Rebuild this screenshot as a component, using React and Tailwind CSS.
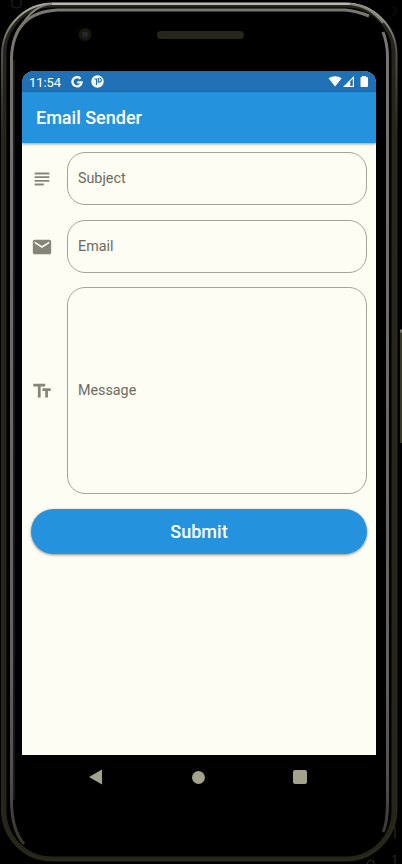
import React from "react";

function PhoneFrame() {
  return (
    <svg className="pointer-events-none absolute inset-0" width="402" height="864" viewBox="0 0 402 864" fill="none">
      <defs>
        <linearGradient id="rim" x1="0" y1="0" x2="0" y2="1">
          <stop offset="0" stopColor="#b5b5ad" />
          <stop offset="0.05" stopColor="#55554a" />
          <stop offset="0.15" stopColor="#29291a" />
          <stop offset="1" stopColor="#292917" />
        </linearGradient>
        <linearGradient id="inner" gradientUnits="userSpaceOnUse" x1="0" y1="10" x2="0" y2="846">
          <stop offset="0" stopColor="#77776f" />
          <stop offset="0.8" stopColor="#62625b" />
          <stop offset="0.92" stopColor="#505048" />
          <stop offset="1" stopColor="#33332a" />
        </linearGradient>
      </defs>
      <rect x="4" y="5" width="390" height="854" rx="48" stroke="#25251a" strokeWidth="5" />
      <rect x="2" y="3.5" width="394.5" height="856.5" rx="51" stroke="url(#rim)" strokeWidth="2" />
      <path d="M50 4H355" stroke="#b9b9b2" strokeWidth="2" />
      <path d="M20 28Q33 5 52 4M350 4Q370 6 383 23" stroke="#85857c" strokeWidth="2" />
      <path
        d="M24 844Q11.500 830 11.500 800V58Q13 12 58 10H345Q357 11 369 16M383 32Q387.500 43 387.500 58V800Q387.500 823 383 832"
        stroke="url(#inner)"
        strokeWidth="3"
      />
      <path d="M14 800V60" stroke="#303042" strokeWidth="1" />
      <path d="M12 0V4Q12 8 16.500 8T21 4V0" stroke="#29291a" />
      <path d="M0 614V680" stroke="#000" strokeWidth="2" />
      <path d="M401 332V443" stroke="#39392a" strokeWidth="2" />
      <path d="M400 331H402" stroke="#777770" strokeWidth="3" />
      <path d="M393 828L395 827V839M393 857L395 855V864M367 864Q368 860 371 860T374 864" stroke="#303020" />
      <path d="M392 8Q396 6 395 10Q399 14 392 15" stroke="#15150c" />
      <circle cx="85" cy="34.500" r="6.500" fill="#17170e" />
      <circle cx="85" cy="34.500" r="3" fill="#26262c" />
      <rect x="157" y="31" width="87" height="8" rx="4" fill="#26261a" />
    </svg>
  );
}

function StatusBar() {
  return (
    <div className="flex h-[21px] shrink-0 items-center bg-[#1f70b4] pl-[7px] pr-[7px] text-white">
      <span className="w-[33px] whitespace-nowrap pt-[2px] text-[13px] leading-none tracking-[-0.1px]">11:54</span>
      <svg className="ml-[9px]" width="12" height="12" viewBox="0 0 12 12" fill="none">
        <path d="M9.500 2.700A4.600 4.600 0 1 0 10.600 6.300H6.200" stroke="white" strokeWidth="2.300" />
      </svg>
      <svg className="ml-2" width="13" height="13" viewBox="0 0 13 13">
        <circle cx="6.500" cy="6.500" r="6.200" fill="white" />
        <path d="M3.300 4H5.500V10M7.300 3V7.200H8.200A2.100 2.100 0 0 0 8.200 3" fill="none" stroke="#1f70b4" strokeWidth="1.200" />
      </svg>
      <svg className="ml-auto" width="41" height="13" viewBox="0 0 41 13">
        <path d="M0.500 3.300Q7 -1 13.700 3.300L7.100 11.500Z" fill="white" />
        <path d="M15 12L26 1V12Z" fill="white" />
        <path d="M22.300 6.200L24.800 3.700V11H22.300Z" fill="#1f70b4" />
        <path d="M34 1H38V2H39Q40 2 40 3V11Q40 12 39 12H33.500Q32.500 12 32.500 11V3Q32.500 2 33.500 2H34Z" fill="white" />
      </svg>
    </div>
  );
}

function SubjectIcon() {
  return (
    <svg width="22" height="22" viewBox="0 0 24 24" fill="#85857a">
      <path d="M14 17H4v2h10v-2zm6-8H4v2h16V9zM4 15h16v-2H4v2zM4 5v2h16V5H4z" />
    </svg>
  );
}

function MailIcon() {
  return (
    <svg width="22" height="22" viewBox="0 0 24 24" fill="#85857a">
      <path d="M20 4H4c-1.100 0-1.990.9-1.990 2L2 18c0 1.100.9 2 2 2h16c1.100 0 2-.9 2-2V6c0-1.100-.9-2-2-2zm0 4-8 5-8-5V6l8 5 8-5v2z" />
    </svg>
  );
}

function TextSizeIcon() {
  return (
    <svg width="22" height="22" viewBox="0 0 24 24" fill="#85857a">
      <path d="M2.500 4v3h5v12h3V7h5V4h-13zm19 5h-9v3h3v7h3v-7h3V9z" />
    </svg>
  );
}

function Field({ icon, label, boxClass }) {
  return (
    <div className="flex items-center">
      <div className="flex w-[23px] shrink-0 justify-center">{icon}</div>
      <div className={`ml-[14px] flex flex-1 items-center rounded-[18px] border border-[#a3a39b] pl-[10px] ${boxClass}`}>
        <span className="text-[14.3px] leading-none text-[#6b6b60]">{label}</span>
      </div>
    </div>
  );
}

export default function App() {
  return (
    <div className="relative h-[864px] w-[402px] overflow-hidden bg-black font-['Roboto',sans-serif]">
      <PhoneFrame />
      <div className="relative pl-[22px] pr-[26px] pt-[71px]">
        <div className="flex h-[684px] flex-col overflow-hidden rounded-t-[12px] bg-[#fdfdf3]">
          <StatusBar />
          <header className="relative flex h-[51px] shrink-0 items-center bg-[#2492dc] pl-[14px] pt-px shadow-[0_1px_3px_rgba(0,0,0,0.4)]">
            <h1 className="text-[18px] font-medium leading-none text-white">Email Sender</h1>
          </header>
          <main className="flex flex-col pl-[8px] pr-[9px] pt-[9px]">
            <div className="flex flex-col">
              <Field icon={<SubjectIcon />} label="Subject" boxClass="h-[53px]" />
              <div className="mt-[15px]">
                <Field icon={<MailIcon />} label="Email" boxClass="h-[53px]" />
              </div>
              <div className="mt-[14px]">
                <Field icon={<TextSizeIcon />} label="Message" boxClass="h-[207px]" />
              </div>
            </div>
            <button className="ml-[1px] mt-[15px] flex h-[45px] items-center justify-center rounded-full bg-[#2492dc] text-[18px] font-medium leading-none text-white shadow-[0_1px_3px_rgba(0,0,0,0.45)]">
              Submit
            </button>
          </main>
        </div>
        <nav className="flex h-[44px] items-center pl-[67px]">
          <svg width="14" height="16" viewBox="0 0 14 16" fill="#a3a38d">
            <path d="M0 8L13 0.500V15.500Z" />
          </svg>
          <div className="ml-[89px] size-[13px] rounded-full bg-[#a3a38d]" />
          <div className="ml-[88px] size-[14px] rounded-[2px] bg-[#a3a38d]" />
        </nav>
      </div>
    </div>
  );
}
